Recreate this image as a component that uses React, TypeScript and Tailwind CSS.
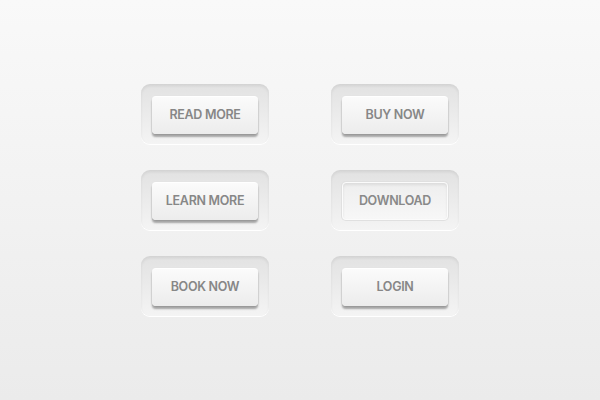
const buttons = [
  { label: "READ MORE", pressed: false },
  { label: "BUY NOW", pressed: false },
  { label: "LEARN MORE", pressed: false },
  { label: "DOWNLOAD", pressed: true },
  { label: "BOOK NOW", pressed: false },
  { label: "LOGIN", pressed: false },
];

const SoftButton = ({ label, pressed }: { label: string; pressed: boolean }) => {
  return (
    <div className="w-[128px] h-[60px] rounded-[9px] bg-gradient-to-b from-[#e2e2e2] to-[#f4f4f4] shadow-[inset_0_2px_3px_rgba(0,0,0,0.07),0_1px_0_#ffffff] flex justify-center pt-[12px]">
      {pressed ? (
        <button className="w-[106px] h-[38px] rounded-[4px] bg-gradient-to-b from-[#eeeeee] to-[#f7f7f7] border border-[#fbfbfb] shadow-[inset_0_2px_3px_rgba(0,0,0,0.08),0_0_0_1px_#e0e0e0] text-[12.5px] font-semibold tracking-[-0.3px] text-[#898989] [font-family:Inter,'Open_Sans',sans-serif]">
          {label}
        </button>
      ) : (
        <button className="w-[106px] h-[38px] rounded-[4px] bg-gradient-to-b from-[#fbfbfb] to-[#ececec] border-t border-t-white shadow-[0_3px_2px_rgba(0,0,0,0.32),0_0_0_1px_#e4e4e4] text-[12.5px] font-semibold tracking-[-0.3px] text-[#878787] [font-family:Inter,'Open_Sans',sans-serif]">
          {label}
        </button>
      )}
    </div>
  );
};

export default function App() {
  return (
    <div className="w-[600px] h-[400px] bg-gradient-to-b from-[#f9f9f9] to-[#ebebeb] flex items-center justify-center">
      <div className="grid grid-cols-2 gap-x-[62px] gap-y-[26px]">
        {buttons.map((b) => (
          <SoftButton key={b.label} label={b.label} pressed={b.pressed} />
        ))}
      </div>
    </div>
  );
}
